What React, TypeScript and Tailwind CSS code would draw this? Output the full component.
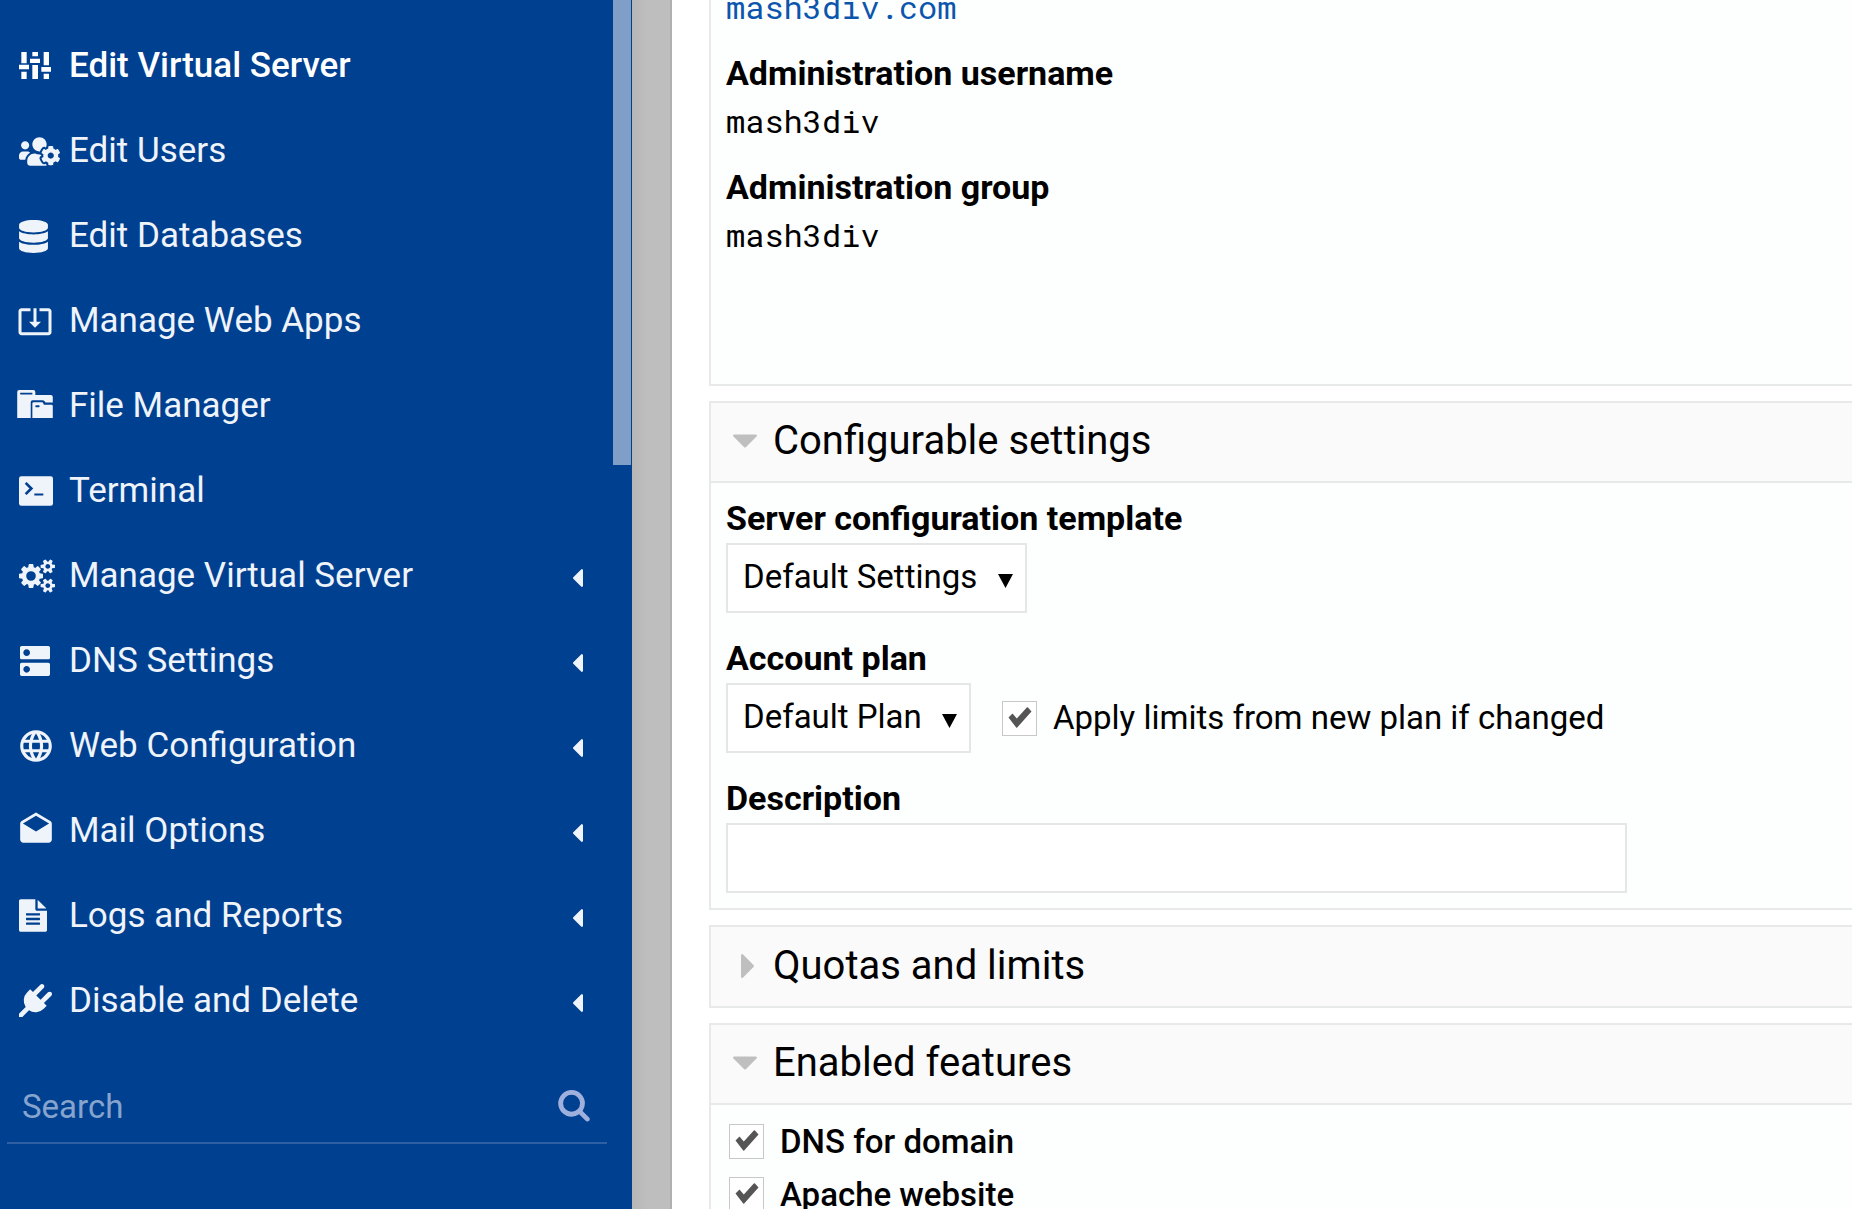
import type { ReactNode } from 'react';
import { FaDatabase, FaUsersCog } from 'react-icons/fa';
import { MdDns, MdDrafts, MdLanguage, MdSystemUpdateAlt } from 'react-icons/md';

type NavItem = {
  label: string;
  icon: ReactNode;
  active?: boolean;
  expandable?: boolean;
};

const SlidersIcon = () => (
  <svg viewBox="0 0 96 81" className="w-8 h-[27px]" fill="currentColor">
    <path d="M7 0h16v34H7zM0 38h30v14H0zM7 59h16v22H7zM40 0h17v13H40zM33 20h30v13H33zM40 39h17v42H40zM74 0h16v40H74zM67 45h29v14H67zM74 65h16v16H74z" />
  </svg>
);

const FoldersIcon = () => (
  <svg viewBox="0 0 108 85" className="-ml-0.5 mb-1 w-9 h-7" fill="currentColor">
    <path
      fillRule="evenodd"
      d="M6 0h43q6 0 6 6v9h47q6 0 6 6v17H86l-3-4q-2-3-6-3H47q-6 0-6 6v48H0V6q0-6 6-6zM9 8v6h37V8z"
    />
    <path
      fillRule="evenodd"
      d="M50 37h25q3 0 4 3l2 5h23q4 0 4 4v36H46V41q0-4 4-4zM57 46q-2 0-2 3t2 3h9q2 0 2-3t-2-3z"
    />
  </svg>
);

const TerminalIcon = () => (
  <svg viewBox="0 0 102 89" className="w-[34px] h-[30px]">
    <rect width="102" height="89" rx="7" fill="currentColor" />
    <path d="M20 20l17 17-17 17" fill="none" stroke="#004090" strokeWidth="8" />
    <path d="M46 55h27" stroke="#004090" strokeWidth="6" />
  </svg>
);

const GearsIcon = () => (
  <svg viewBox="0 0 1920 1792" className="w-9 h-[34px]" fill="currentColor">
    <path d="M896 896q0-106-75-181t-181-75-181 75-75 181 75 181 181 75 181-75 75-181zm768 512q0-52-38-90t-90-38-90 38-38 90q0 53 37.5 90.5t90.5 37.5 90.5-37.5 37.5-90.5zm0-1024q0-52-38-90t-90-38-90 38-38 90q0 53 37.5 90.5t90.5 37.5 90.5-37.5 37.5-90.5zm-384 421v185q0 10-7 19.5t-16 10.5l-155 24q-11 35-32 76 34 48 90 115 7 11 7 20 0 12-7 19-23 30-82.5 89.5t-78.5 59.5q-11 0-21-7l-115-90q-37 19-77 31-11 108-23 155-7 24-30 24h-186q-11 0-20-7.5t-10-17.5l-23-153q-34-10-75-31l-118 89q-7 7-20 7-11 0-21-8-144-133-144-160 0-9 7-19 10-14 41-53t47-61q-23-44-35-82l-152-24q-10-1-17-9.5t-7-19.5v-185q0-10 7-19.5t16-10.5l155-24q11-35 32-76-34-48-90-115-7-11-7-20 0-12 7-20 22-30 82-89t79-59q11 0 21 7l115 90q34-18 77-32 11-108 23-154 7-24 30-24h186q11 0 20 7.5t10 17.5l23 153q34 10 75 31l118-89q8-7 20-7 11 0 21 8 144 133 144 160 0 8-7 19-12 16-42 54t-45 60q23 48 34 82l152 23q10 2 17 10.5t7 19.5zm640 533v140q0 16-149 31-12 27-30 52 51 113 51 138 0 4-4 7-122 71-124 71-8 0-46-47t-52-68q-20 2-30 2t-30-2q-14 21-52 68t-46 47q-2 0-124-71-4-3-4-7 0-25 51-138-18-25-30-52-149-15-149-31v-140q0-16 149-31 13-29 30-52-51-113-51-138 0-4 4-7 4-2 35-20t59-34 30-16q8 0 46 46.5t52 67.5q20-2 30-2t30 2q51-71 92-112l6-2q4 0 124 70 4 3 4 7 0 25-51 138 17 23 30 52 149 15 149 31zm0-1024v140q0 16-149 31-12 27-30 52 51 113 51 138 0 4-4 7-122 71-124 71-8 0-46-47t-52-68q-20 2-30 2t-30-2q-14 21-52 68t-46 47q-2 0-124-71-4-3-4-7 0-25 51-138-18-25-30-52-149-15-149-31v-140q0-16 149-31 13-29 30-52-51-113-51-138 0-4 4-7 4-2 35-20t59-34 30-16q8 0 46 46.5t52 67.5q20-2 30-2t30 2q51-71 92-112l6-2q4 0 124 70 4 3 4 7 0 25-51 138 17 23 30 52 149 15 149 31z" />
  </svg>
);

const FileTextIcon = () => (
  <svg viewBox="128 0 1536 1792" className="w-7 h-[33px]" fill="currentColor">
    <path d="M1596 476q14 14 28 36h-472v-472q22 14 36 28zm-476 164h544v1056q0 40-28 68t-68 28h-1344q-40 0-68-28t-28-68v-1600q0-40 28-68t68-28h800v544q0 40 28 68t68 28zm160 736v-64q0-14-9-23t-23-9h-704q-14 0-23 9t-9 23v64q0 14 9 23t23 9h704q14 0 23-9t9-23zm0-256v-64q0-14-9-23t-23-9h-704q-14 0-23 9t-9 23v64q0 14 9 23t23 9h704q14 0 23-9t9-23zm0-256v-64q0-14-9-23t-23-9h-704q-14 0-23 9t-9 23v64q0 14 9 23t23 9h704q14 0 23-9t9-23z" />
  </svg>
);

const PlugIcon = () => (
  <svg viewBox="0 0 1792 1792" className="size-[33px]" fill="currentColor">
    <path d="M1755 453q37 38 37 90.5t-37 90.5l-401 400 150 150-160 160q-163 163-389.5 186.5t-411.5-100.5l-362 362h-181v-181l362-362q-124-185-100.5-411.5t186.5-389.5l160-160 150 150 400-401q38-37 91-37t90 37 37 90.5-37 90.5l-400 401 234 234 401-400q38-37 91-37t90 37z" />
  </svg>
);

const SearchIcon = () => (
  <svg viewBox="0 128 1792 1792" className="size-[34px]" fill="currentColor">
    <path d="M1216 832q0-185-131.5-316.5t-316.5-131.5-316.5 131.5-131.5 316.5 131.5 316.5 316.5 131.5 316.5-131.5 131.5-316.5zm512 832q0 52-38 90t-90 38q-54 0-90-38l-343-342q-179 124-399 124-143 0-273.5-55.5t-225-150-150-225-55.5-273.5 55.5-273.5 150-225 225-150 273.5-55.5 273.5 55.5 225 150 150 225 55.5 273.5q0 220-124 399l343 343q37 37 37 90z" />
  </svg>
);

const navItems: NavItem[] = [
  { label: 'Edit Virtual Server', icon: <SlidersIcon />, active: true },
  { label: 'Edit Users', icon: <FaUsersCog className="mt-0.5 w-[41px] h-[33px]" /> },
  { label: 'Edit Databases', icon: <FaDatabase className="mt-0.5 w-[29px] h-[33px]" /> },
  { label: 'Manage Web Apps', icon: <MdSystemUpdateAlt className="-ml-0.5 size-9" /> },
  { label: 'File Manager', icon: <FoldersIcon /> },
  { label: 'Terminal', icon: <TerminalIcon /> },
  { label: 'Manage Virtual Server', icon: <GearsIcon />, expandable: true },
  { label: 'DNS Settings', icon: <MdDns className="-ml-1 size-10" />, expandable: true },
  { label: 'Web Configuration', icon: <MdLanguage className="-ml-0.5 size-[38px]" />, expandable: true },
  { label: 'Mail Options', icon: <MdDrafts className="-ml-0.5 mb-0.5 size-[38px]" />, expandable: true },
  { label: 'Logs and Reports', icon: <FileTextIcon />, expandable: true },
  { label: 'Disable and Delete', icon: <PlugIcon />, expandable: true },
];

const Sidebar = () => (
  <aside className="relative w-[632px] shrink-0 bg-[#004090] text-[#eff3fa]">
    <nav className="pt-[23px]">
      {navItems.map((item) => (
        <a
          key={item.label}
          href="#"
          className={`flex h-[85px] items-center pl-[19px] pr-[49px] text-[35px] ${item.active ? 'font-medium text-white' : ''}`}
        >
          <span className="flex w-[50px] shrink-0 items-center">{item.icon}</span>
          <span className="flex-1 pt-0.5">{item.label}</span>
          {item.expandable && (
            <svg viewBox="640 384 576 1024" className="mt-1 h-[18px] w-2.5" fill="currentColor">
              <path d="M1216 448v896q0 26-19 45t-45 19-45-19l-448-448q-19-19-19-45t19-45l448-448q19-19 45-19t45 19 19 45z" />
            </svg>
          )}
        </a>
      ))}
    </nav>

    <form className="ml-[7px] mr-[25px] mt-7 flex h-[73px] items-center border-b-2 border-[#2f5fa3] pl-[15px] pr-4">
      <input
        type="search"
        aria-label="Search"
        placeholder="Search"
        className="min-w-0 flex-1 bg-transparent text-[33px] outline-none placeholder:text-[#86a4cd]"
      />
      <button type="submit" aria-label="Submit search" className="text-[#9fb0dd]">
        <SearchIcon />
      </button>
    </form>

    {/* Scroll thumb */}
    <div className="absolute right-px top-0 h-[465px] w-[18px] bg-[#809fc7]" />
  </aside>
);

const CaretIcon = ({ open }: { open: boolean }) => (
  <svg viewBox="0 0 24 24" className="size-6 text-[#bfbfbf]" fill="currentColor">
    {open ? (
      <path d="M1.5 5.5h21q1.500 0 1.500 1 0 .6-.5 1.100L13 18q-1 1-2 0L.5 7.600Q0 7 0 6.500q0-1 1.500-1z" />
    ) : (
      <path d="M8 1.500v21q0 1.500 1 1.500.6 0 1.100-.5L20.500 13q1-1 0-2L10.100.5Q9.500 0 9 0 8 0 8 1.500z" />
    )}
  </svg>
);

const Panel = ({ title, children }: { title: string; children?: ReactNode }) => (
  <section className="mb-[15px] border-2 border-r-0 border-[#e8eaea] bg-[#fdfefe]">
    <h2 className={`bg-[#fafafa] text-[40px] ${children ? 'border-b-2 border-[#e8eaea]' : 'pt-px'}`}>
      <button type="button" aria-expanded={!!children} className="flex h-[78px] w-full items-center gap-4 pb-0.5 pl-[22px] text-left">
        <CaretIcon open={!!children} />
        {title}
      </button>
    </h2>
    {children}
  </section>
);

const Detail = ({ label, children }: { label: string; children: ReactNode }) => (
  <div className="mb-[18px]">
    <dt className="font-bold leading-[52px]">{label}</dt>
    <dd className="font-['Roboto_Mono','Liberation_Mono',monospace] text-[32px] leading-[44px]">{children}</dd>
  </div>
);

const Field = ({ id, label, children }: { id: string; label: string; children: ReactNode }) => (
  <div>
    <label htmlFor={id} className="mb-0.5 block font-bold leading-[46px]">
      {label}
    </label>
    {children}
  </div>
);

const Select = ({ id, value }: { id: string; value: string }) => (
  <div className="relative">
    <select
      id={id}
      className="h-[70px] appearance-none border-2 border-[#e5e7e7] bg-white pb-0.5 pl-[15px] pr-[47px] text-[33px] outline-none"
    >
      <option>{value}</option>
    </select>
    <svg viewBox="0 0 15 14" className="pointer-events-none absolute right-3.5 top-[31px] h-3.5 w-[15px]">
      <path d="M0 0h15L7.500 14z" />
    </svg>
  </div>
);

const Checkbox = ({ label, bold }: { label: string; bold?: boolean }) => (
  <label className={`flex h-[53px] items-center gap-4 text-[33px] ${bold ? 'font-medium' : ''}`}>
    <span className="relative flex">
      <input type="checkbox" defaultChecked className="size-[35px] appearance-none border border-[#c8c8c8] bg-white" />
      <svg viewBox="0 0 24 21" className="pointer-events-none absolute left-1.5 top-1.5 h-[21px] w-6" fill="#555">
        <path d="M.5 10.500L4.500 6.500 8.800 11.500 18.800.6Q19.400 0 20 .6L23.500 4.500 9.200 20.500Q8.700 21 8.200 20.500z" />
      </svg>
    </span>
    <span>{label}</span>
  </label>
);

const App = () => {
  return (
    <div className="flex h-screen overflow-hidden bg-white font-[Roboto,sans-serif] text-[34px] text-black">
      <Sidebar />
      <div className="w-10 shrink-0 border-r-2 border-[#b0b0b0] bg-linear-to-r from-[#b6b6b6] to-[#bebebe] to-40%" />

      <main className="-mt-[15px] min-w-0 flex-1 pl-[37px]">
        <section className="mb-[15px] border-2 border-r-0 border-t-0 border-[#e8eaea] bg-[#fdfefe] pb-[109px] pl-[15px]">
          <a
            href="#"
            className="mb-[18px] block font-['Roboto_Mono','Liberation_Mono',monospace] text-[32px] leading-[44px] text-[#0c55ad]"
          >
            mash3div.com
          </a>
          <dl>
            <Detail label="Administration username">mash3div</Detail>
            <Detail label="Administration group">mash3div</Detail>
          </dl>
        </section>

        <Panel title="Configurable settings">
          <div className="flex flex-col gap-[22px] pb-[15px] pl-[15px] pt-3">
            <Field id="template" label="Server configuration template">
              <div className="flex">
                <Select id="template" value="Default Settings" />
              </div>
            </Field>
            <Field id="plan" label="Account plan">
              <div className="flex items-center gap-[31px]">
                <Select id="plan" value="Default Plan" />
                <Checkbox label="Apply limits from new plan if changed" />
              </div>
            </Field>
            <Field id="description" label="Description">
              <input id="description" type="text" className="block h-[70px] w-4/5 border-2 border-[#e5e7e7] bg-white px-4 outline-none" />
            </Field>
          </div>
        </Panel>

        <Panel title="Quotas and limits" />

        <Panel title="Enabled features">
          <div className="pl-[18px] pt-2.5">
            <Checkbox label="DNS for domain" bold />
            <Checkbox label="Apache website" bold />
          </div>
        </Panel>
      </main>
    </div>
  );
};

export default App;
